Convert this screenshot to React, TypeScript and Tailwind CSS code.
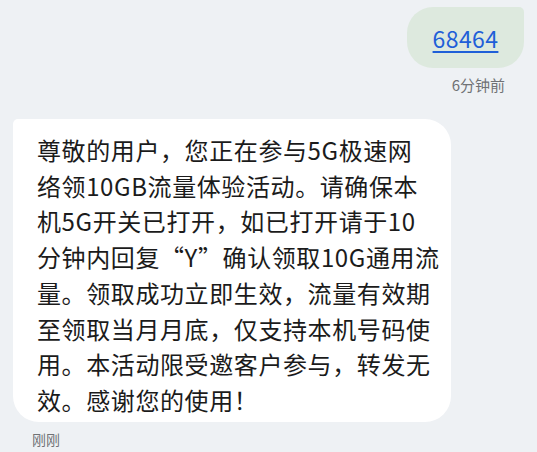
import React from "react";

const lines = [
  "尊敬的用户，您正在参与5G极速网",
  "络领10GB流量体验活动。请确保本",
  "机5G开关已打开，如已打开请于10",
  "分钟内回复“Y”确认领取10G通用流",
  "量。领取成功立即生效，流量有效期",
  "至领取当月月底，仅支持本机号码使",
  "用。本活动限受邀客户参与，转发无",
  "效。感谢您的使用！",
];

export default function App() {
  return (
    <div
      className="w-[537px] h-[452px] bg-[#eef1f4] flex flex-col overflow-hidden"
      style={{ fontFamily: '"Noto Sans CJK SC", "Noto Sans", sans-serif' }}
    >
      <div className="flex justify-end pr-[13px] pt-[7px]">
        <div className="w-[117px] h-[61px] bg-[#dde9de] rounded-[26px] rounded-tr-[5px] flex items-center justify-center">
          <span className="text-[23px] leading-[30px] text-[#1f5fd8] underline underline-offset-[3px] decoration-[1.5px] tracking-[0.4px]">
            68464
          </span>
        </div>
      </div>
      <div className="flex justify-end pr-[32px] mt-[8px]">
        <span className="text-[15px] leading-[18px] text-[#707275]">6分钟前</span>
      </div>
      <div className="pl-[13px] mt-[25px]">
        <div className="w-[438px] h-[303px] bg-white rounded-[26px] rounded-tl-[5px] pl-[24px] pt-[13px]">
          {lines.map((l, i) => (
            <div
              key={i}
              className="whitespace-nowrap text-[24px] leading-[35.7px] text-[#1b1b1b] tracking-[0.6px]"
            >
              {l}
            </div>
          ))}
        </div>
      </div>
      <div className="pl-[32px] mt-[4px]">
        <span className="text-[14px] leading-[18px] text-[#707275]">刚刚</span>
      </div>
    </div>
  );
}
